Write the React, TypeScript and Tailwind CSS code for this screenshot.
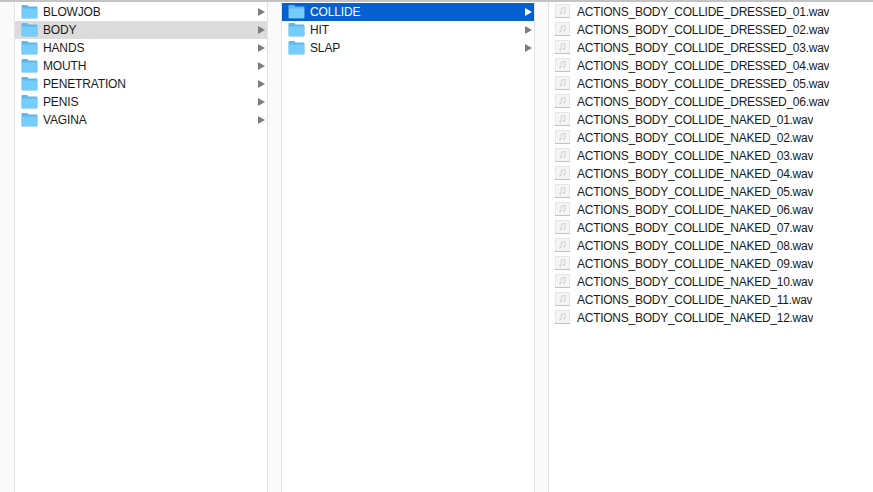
const col1 = ["BLOWJOB", "BODY", "HANDS", "MOUTH", "PENETRATION", "PENIS", "VAGINA"];
const col2 = ["COLLIDE", "HIT", "SLAP"];
const files = [
  ...["01", "02", "03", "04", "05", "06"].map((n) => `ACTIONS_BODY_COLLIDE_DRESSED_${n}.wav`),
  ...["01", "02", "03", "04", "05", "06", "07", "08", "09", "10", "11", "12"].map((n) => `ACTIONS_BODY_COLLIDE_NAKED_${n}.wav`),
];

function Folder() {
  return (
    <svg width="17" height="15" viewBox="0 1 17 15" className="shrink-0">
      <path d="M0.5 2.2C0.5 1.3 1 1 1.8 1H5.6C6.3 1 6.6 1.3 7 2L7.4 2.6H15.2C16 2.6 16.5 3.1 16.5 3.9V13.2C16.5 14 16 14.5 15.2 14.5H1.8C1 14.5 .5 14 .5 13.2Z" fill="#5cb8ea" />
      <path d="M0.9 4.4H16.1V13.2C16.1 13.8 15.8 14.1 15.2 14.1H1.8C1.2 14.1 .9 13.8 .9 13.2Z" fill="#74cdfb" />
    </svg>
  );
}

function Arrow({ color }: { color: string }) {
  return (
    <svg width="7" height="8" viewBox="0 0 7 8" className="shrink-0">
      <path d="M0 0L7 4L0 8Z" fill={color} />
    </svg>
  );
}

function Row({ label, state }: { label: string; state?: "selected" | "inactive" }) {
  const bg = state === "selected" ? "bg-[#0560d0] text-white" : state === "inactive" ? "bg-[#dcdcdc] text-[#1a1a1a]" : "text-[#1a1a1a]";
  return (
    <div className={`flex h-[18px] items-center pl-[6px] pr-[2px] ${bg}`}>
      <Folder />
      <span className="ml-[5px] flex-1 truncate tracking-[-0.15px]">{label}</span>
      <Arrow color={state === "selected" ? "#ffffff" : "#7d7d7d"} />
    </div>
  );
}

function FileIcon() {
  return (
    <svg width="15" height="18" viewBox="0 0 15 18" className="shrink-0">
      <rect x="0.5" y="1.5" width="14" height="13" fill="#f5f5f5" stroke="#e6e6e6" />
      <path d="M0 14.5H15" stroke="#c2c2c2" />
      <path d="M6.2 10.4V5.2L10 4.5V9.6" fill="none" stroke="#d0d0d0" />
      <circle cx="5.2" cy="10.5" r="1" fill="#d0d0d0" />
      <circle cx="9" cy="9.7" r="1" fill="#d0d0d0" />
    </svg>
  );
}

function Gutter() {
  return <div className="w-[15px] shrink-0 border-x border-[#e4e4e4] bg-[#fafafa]" />;
}

export default function App() {
  return (
    <div className="flex h-[492px] w-[873px] flex-col overflow-hidden bg-white font-['Helvetica_Neue','Liberation_Sans',Arial,sans-serif] text-[12px] leading-[18px]">
      <div className="h-[2px] shrink-0 bg-[#c4c4c4]" />
      <div className="flex min-h-0 flex-1">
        <div className="w-[15px] shrink-0 border-r border-[#e4e4e4] bg-[#fafafa]" />
        <div className="w-[252px] shrink-0 pt-px">
          {col1.map((l) => (
            <Row key={l} label={l} state={l === "BODY" ? "inactive" : undefined} />
          ))}
        </div>
        <Gutter />
        <div className="w-[252px] shrink-0 pt-px">
          {col2.map((l) => (
            <Row key={l} label={l} state={l === "COLLIDE" ? "selected" : undefined} />
          ))}
        </div>
        <Gutter />
        <div className="flex-1 pt-px">
          {files.map((f) => (
            <div key={f} className="flex h-[18px] items-center pl-[6px] text-[#1a1a1a]">
              <FileIcon />
              <span className="ml-[7px] truncate tracking-[-0.26px]">{f}</span>
            </div>
          ))}
        </div>
      </div>
    </div>
  );
}
